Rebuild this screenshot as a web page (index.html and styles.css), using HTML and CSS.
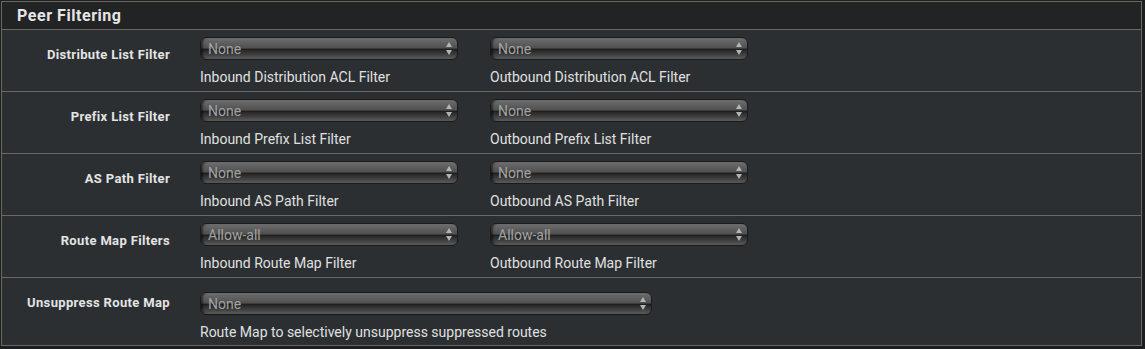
FILE: index.html
```html
<!DOCTYPE html>
<html>
<head>
<meta charset="utf-8">
<link rel="stylesheet" href="styles.css">
</head>
<body>
<div class="panel">
  <div class="panel-head">Peer Filtering</div>
  <div class="row">
    <div class="label">Distribute List Filter</div>
    <div class="fields">
      <div class="field">
        <div class="sel"><span class="val">None</span><span class="arrows"></span></div>
        <div class="help">Inbound Distribution ACL Filter</div>
      </div>
      <div class="field">
        <div class="sel"><span class="val">None</span><span class="arrows"></span></div>
        <div class="help">Outbound Distribution ACL Filter</div>
      </div>
    </div>
  </div>
  <div class="row">
    <div class="label">Prefix List Filter</div>
    <div class="fields">
      <div class="field">
        <div class="sel"><span class="val">None</span><span class="arrows"></span></div>
        <div class="help">Inbound Prefix List Filter</div>
      </div>
      <div class="field">
        <div class="sel"><span class="val">None</span><span class="arrows"></span></div>
        <div class="help">Outbound Prefix List Filter</div>
      </div>
    </div>
  </div>
  <div class="row">
    <div class="label">AS Path Filter</div>
    <div class="fields">
      <div class="field">
        <div class="sel"><span class="val">None</span><span class="arrows"></span></div>
        <div class="help">Inbound AS Path Filter</div>
      </div>
      <div class="field">
        <div class="sel"><span class="val">None</span><span class="arrows"></span></div>
        <div class="help">Outbound AS Path Filter</div>
      </div>
    </div>
  </div>
  <div class="row">
    <div class="label">Route Map Filters</div>
    <div class="fields">
      <div class="field">
        <div class="sel"><span class="val">Allow-all</span><span class="arrows"></span></div>
        <div class="help">Inbound Route Map Filter</div>
      </div>
      <div class="field">
        <div class="sel"><span class="val">Allow-all</span><span class="arrows"></span></div>
        <div class="help">Outbound Route Map Filter</div>
      </div>
    </div>
  </div>
  <div class="row row-last">
    <div class="label">Unsuppress Route Map</div>
    <div class="fields">
      <div class="field">
        <div class="sel sel-wide"><span class="val">None</span><span class="arrows"></span></div>
        <div class="help">Route Map to selectively unsuppress suppressed routes</div>
      </div>
    </div>
  </div>
</div>
</body>
</html>
```
FILE: styles.css
```css
html, body {
  margin: 0;
  padding: 0;
  background: #1d1e1f;
}
body {
  padding: 1px 0 0 1px;
  width: 1145px;
  height: 349px;
  box-sizing: border-box;
  font-family: Roboto, "Noto Sans", sans-serif;
  color: #e2e2e2;
}
.panel {
  width: 1141px;
  border: 1px solid #6e675f;
  box-sizing: border-box;
  background: #2b2f32;
}
.panel-head {
  height: 27px;
  background: #222324;
  border-bottom: 1px solid #6e675f;
  padding-left: 15px;
  font-weight: bold;
  font-size: 16px;
  letter-spacing: 0.55px;
  line-height: 27px;
  color: #e6e6e6;
}
.row {
  display: flex;
  height: 61px;
  border-bottom: 1px solid #6e675f;
}
.row-last {
  height: 67px;
  border-bottom: none;
}
.label {
  width: 168px;
  flex: none;
  text-align: right;
  font-weight: bold;
  font-size: 13px;
  letter-spacing: 0.35px;
  padding-top: 17px;
  line-height: 16px;
  color: #e4e4e4;
}
.fields {
  display: flex;
  gap: 32px;
  padding-left: 30px;
  padding-top: 7px;
}
.row-last .fields {
  padding-top: 14px;
}
.field {
  display: flex;
  flex-direction: column;
}
.sel {
  position: relative;
  width: 258px;
  height: 23px;
  box-sizing: border-box;
  border-radius: 6px;
  border: 1px solid #1a1b1c;
  background: linear-gradient(to bottom,
    #6e6e6e 0%, #5e5e5e 25%, #505050 48%, #1c1c1c 53%, #2a2a2a 60%, #404040 80%, #5c5c5c 100%);
  box-shadow: inset 3px 0 2px -1px rgba(0,0,0,0.5);
}
.sel-wide {
  width: 452px;
}
.val {
  position: absolute;
  left: 7px;
  top: 3px;
  font-size: 14px;
  line-height: 16px;
  color: #a2a2a2;
}
.arrows {
  position: absolute;
  right: 4px;
  top: 4px;
  width: 7px;
  height: 13px;
}
.arrows::before, .arrows::after {
  content: "";
  position: absolute;
  left: 0;
  border-left: 3.5px solid transparent;
  border-right: 3.5px solid transparent;
}
.arrows::before {
  top: 0;
  border-bottom: 5px solid #b4b4b4;
}
.arrows::after {
  bottom: 0;
  border-top: 5px solid #b4b4b4;
}
.help {
  margin-top: 9px;
  font-size: 14px;
  line-height: 16px;
  color: #e0e0e0;
}
```
